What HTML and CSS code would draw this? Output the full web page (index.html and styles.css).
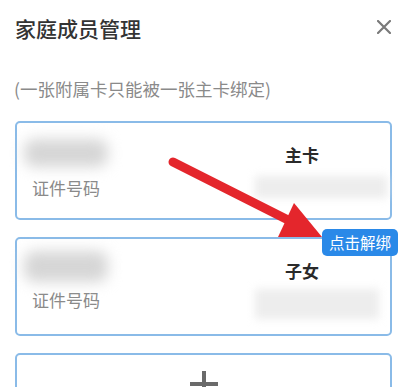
FILE: index.html
```html
<!DOCTYPE html>
<html lang="zh">
<head>
<meta charset="utf-8">
<link rel="stylesheet" href="styles.css">
</head>
<body>
<div class="page">
  <div class="header">
    <div class="title">家庭成员管理</div>
    <svg class="close" width="14" height="14" viewBox="0 0 14 14"><path d="M1 1L13 13M13 1L1 13" stroke="#7a7a7a" stroke-width="2.2" stroke-linecap="round"/></svg>
  </div>
  <div class="note">(一张附属卡只能被一张主卡绑定)</div>
  <div class="list">
    <div class="card">
      <div class="col-left">
        <div class="blur-name"></div>
        <div class="label">证件号码</div>
      </div>
      <div class="col-right">
        <div class="role">主卡</div>
        <div class="blur-id"></div>
      </div>
    </div>
    <div class="card">
      <div class="col-left">
        <div class="blur-name tall"></div>
        <div class="label">证件号码</div>
      </div>
      <div class="col-right">
        <div class="role">子女</div>
        <div class="blur-id tall"></div>
      </div>
      <div class="badge">点击解绑</div>
    </div>
    <div class="card add">
      <div class="plus"></div>
    </div>
  </div>
  <svg class="arrow" width="405" height="387" viewBox="0 0 405 387">
    <line x1="173" y1="162" x2="292" y2="222" stroke="#e4262c" stroke-width="9" stroke-linecap="round"/>
    <polygon points="322,237 294,203 278,237" fill="#e4262c"/>
  </svg>
</div>
</body>
</html>
```

FILE: styles.css
```css
html, body {
  margin: 0;
  padding: 0;
  background: #ffffff;
}
body {
  width: 405px;
  height: 387px;
  overflow: hidden;
  font-family: "Noto Sans CJK SC", "Noto Sans", sans-serif;
}
.page {
  position: relative;
  width: 405px;
  height: 387px;
  overflow: hidden;
}
.header {
  height: 56px;
  padding: 0 14px 0 15px;
  display: flex;
  align-items: center;
  justify-content: space-between;
}
.title {
  font-size: 21px;
  font-weight: 500;
  color: #333333;
  line-height: 24px;
}
.close {
  display: block;
  margin-top: -2px;
}
.note {
  margin-top: 21px;
  padding-left: 14px;
  font-size: 17.5px;
  line-height: 24px;
  color: #8a8a8a;
  height: 24px;
}
.list {
  margin-top: 20px;
  padding: 0 13px 0 15px;
  display: flex;
  flex-direction: column;
  gap: 17px;
}
.card {
  position: relative;
  height: 99px;
  box-sizing: border-box;
  border: 2px solid #8abbe8;
  border-radius: 5px;
  display: flex;
}
.col-left {
  width: 238px;
  padding-left: 15px;
  box-sizing: border-box;
}
.blur-name {
  margin-top: 16px;
  margin-left: -8px;
  width: 84px;
  height: 28px;
  background: #d6d6d6;
  border-radius: 10px;
  filter: blur(7px);
}
.blur-name.tall {
  margin-top: 12px;
  height: 31px;
  margin-bottom: -3px;
}
.label {
  margin-top: 9px;
  font-size: 17px;
  line-height: 24px;
  color: #8a8a8a;
}
.col-right {
  flex: 1;
}
.role {
  margin-top: 20px;
  padding-left: 30px;
  font-size: 17px;
  font-weight: 700;
  line-height: 24px;
  color: #2a2a2a;
}
.blur-id {
  margin-top: 9px;
  width: 132px;
  height: 22px;
  background: #ededed;
  filter: blur(4px);
}
.blur-id.tall {
  margin-top: 6px;
  height: 30px;
  width: 124px;
}
.badge {
  position: absolute;
  top: -10px;
  right: -8px;
  width: 76px;
  height: 27px;
  box-sizing: border-box;
  background: #2a89e8;
  color: #ffffff;
  font-size: 15.5px;
  line-height: 27px;
  text-align: center;
  border-radius: 5px;
}
.card.add {
  justify-content: center;
}
.plus {
  position: relative;
  margin-top: 16px;
  width: 28px;
  height: 28px;
}
.plus::before,
.plus::after {
  content: "";
  position: absolute;
  background: #6a6a6a;
}
.plus::before {
  left: 12px;
  top: 0;
  width: 4px;
  height: 28px;
}
.plus::after {
  left: 0;
  top: 11px;
  width: 28px;
  height: 4px;
}
.arrow {
  position: absolute;
  left: 0;
  top: 0;
  pointer-events: none;
}
```
